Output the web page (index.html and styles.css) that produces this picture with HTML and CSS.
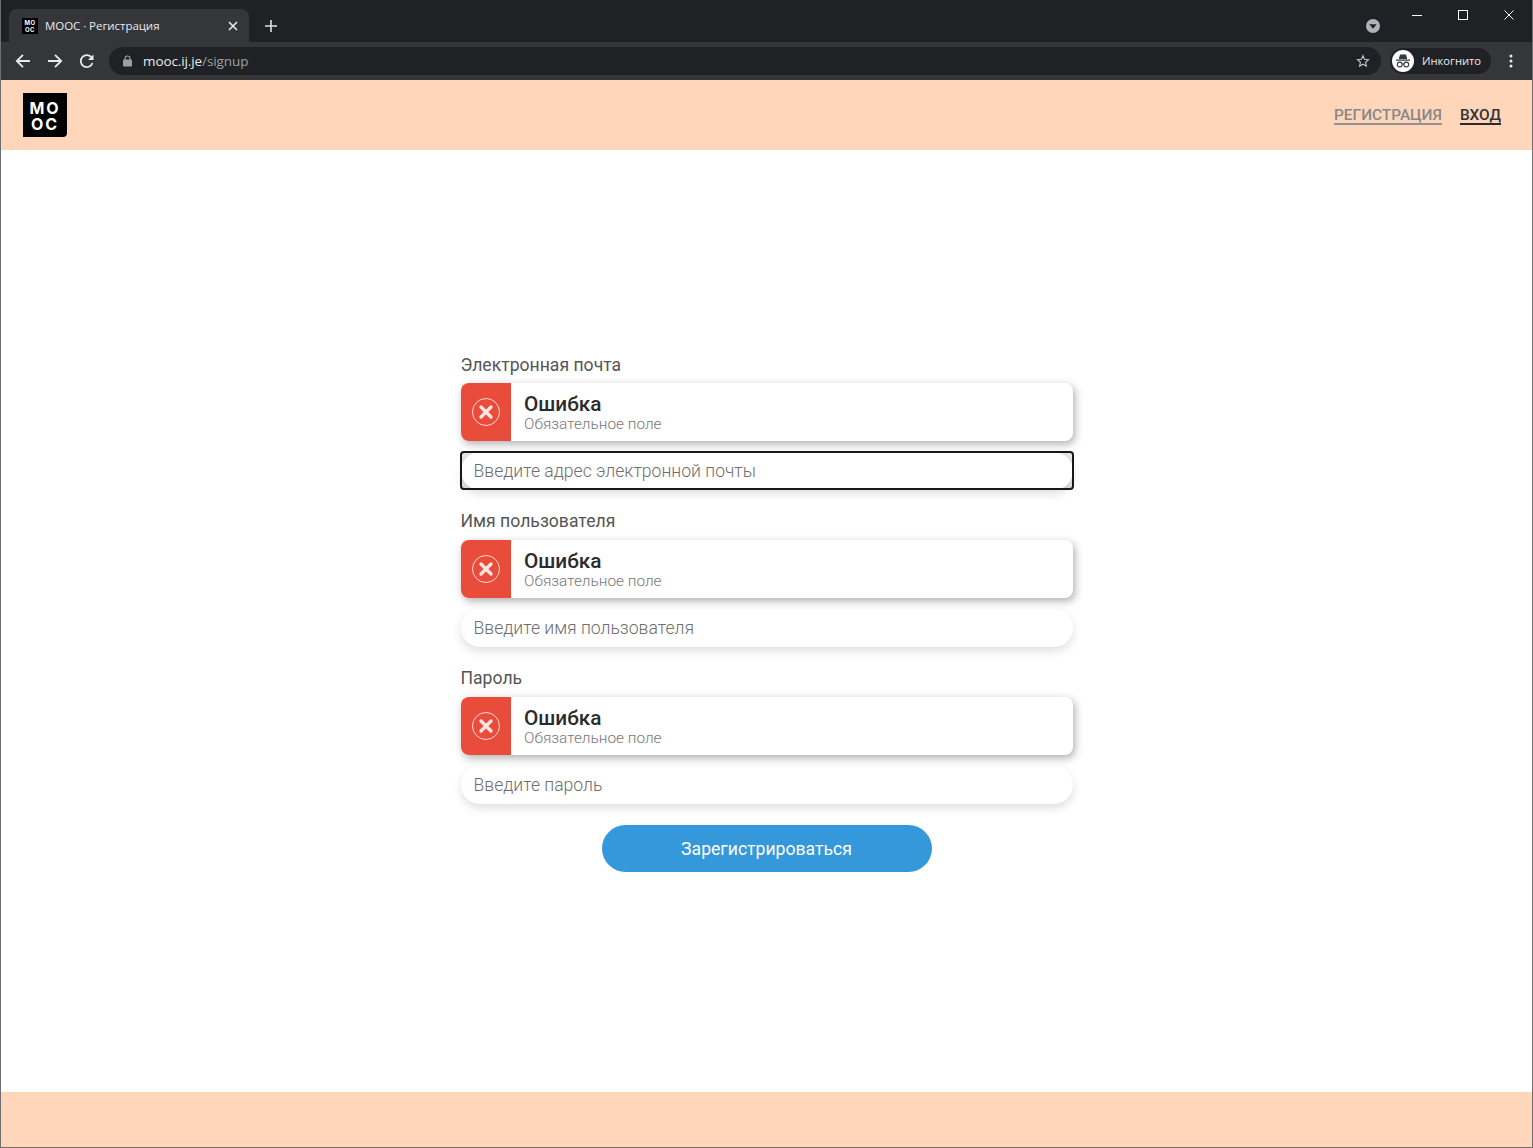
FILE: index.html
```html
<!DOCTYPE html>
<html lang="ru">
<head>
<meta charset="utf-8">
<title>MOOC · Регистрация</title>
<link rel="stylesheet" href="styles.css">
</head>
<body>
<div class="window">
  <div class="tabstrip">
    <div class="tab">
      <span class="favicon">MO<br>OC</span>
      <span class="tab-title">MOOC · Регистрация</span>
      <svg class="tab-close" width="10" height="10" viewBox="0 0 10 10"><path d="M1 1l8 8M9 1l-8 8" stroke="#e8eaed" stroke-width="1.6" fill="none"/></svg>
    </div>
    <svg class="new-tab" width="12" height="12" viewBox="0 0 12 12"><path d="M6 0v12M0 6h12" stroke="#dfe1e5" stroke-width="1.6" fill="none"/></svg>
    <div class="strip-right">
      <span class="tab-search"><svg width="14" height="14" viewBox="0 0 14 14"><circle cx="7" cy="7" r="7" fill="#b0b2b7"/><path d="M3.3 5.2h7.4L7 9.8z" fill="#202124"/></svg></span>
      <div class="win-controls">
        <svg width="10" height="10" viewBox="0 0 10 10"><path d="M0 5.5h10" stroke="#fff" stroke-width="1"/></svg>
        <svg width="10" height="10" viewBox="0 0 10 10"><rect x=".5" y=".5" width="9" height="9" stroke="#fff" fill="none"/></svg>
        <svg width="10" height="10" viewBox="0 0 10 10"><path d="M.5.5l9 9M9.500.5l-9 9" stroke="#fff" fill="none"/></svg>
      </div>
    </div>
  </div>
  <div class="toolbar">
    <svg class="nav-icon" width="16" height="16" viewBox="0 0 16 16"><path d="M15 8H2M8 1.800 1.800 8 8 14.200" stroke="#e8eaed" stroke-width="1.800" fill="none"/></svg>
    <svg class="nav-icon" width="16" height="16" viewBox="0 0 16 16"><path d="M1 8h13M8 1.800 14.200 8 8 14.200" stroke="#e8eaed" stroke-width="1.800" fill="none"/></svg>
    <svg class="nav-icon" width="16" height="16" viewBox="0 0 16 16"><path d="M13.500 10a6 6 0 1 1-.6-5" stroke="#e8eaed" stroke-width="1.800" fill="none"/><path d="M14.500 1.500v5.500h-5.500z" fill="#e8eaed"/></svg>
    <div class="omnibox">
      <svg class="lock" width="9" height="12" viewBox="0 0 9 12"><path d="M2 5V3.500a2.500 2.500 0 0 1 5 0V5" stroke="#9aa0a6" stroke-width="1.200" fill="none"/><rect y="4.500" width="9" height="7" rx="1" fill="#9aa0a6"/></svg>
      <span class="url"><span class="url-host">mooc.ij.je</span>/signup</span>
      <svg class="star" width="14" height="14" viewBox="0 0 24 24"><path d="M12 3l2.700 6.100 6.600.7-4.900 4.400 1.400 6.500L12 17.400l-5.800 3.300 1.400-6.500-4.900-4.400 6.600-.7z" stroke="#bdc1c6" stroke-width="2" fill="none"/></svg>
    </div>
    <div class="profile">
      <span class="profile-icon"><svg width="16" height="14" viewBox="0 0 16 14"><path d="M5 0.500h6l1.200 4.500H3.800zM1 5.500h14v1.200H1z" fill="#35363a"/><circle cx="4.700" cy="10.500" r="2.400" stroke="#35363a" stroke-width="1.100" fill="none"/><circle cx="11.300" cy="10.500" r="2.400" stroke="#35363a" stroke-width="1.100" fill="none"/><path d="M7 10h2" stroke="#35363a"/></svg></span>
      <span class="profile-name">Инкогнито</span>
    </div>
    <svg class="menu" width="4" height="14" viewBox="0 0 4 14"><circle cx="2" cy="2" r="1.500" fill="#e8eaed"/><circle cx="2" cy="7" r="1.500" fill="#e8eaed"/><circle cx="2" cy="12" r="1.500" fill="#e8eaed"/></svg>
  </div>

  <header class="site-header">
    <a class="logo">MO<br>OC</a>
    <nav class="site-nav">
      <a class="nav-link muted">РЕГИСТРАЦИЯ</a>
      <a class="nav-link">ВХОД</a>
    </nav>
  </header>

  <main class="site-main">
    <form class="form">
      <div class="field">
        <div class="label">Электронная почта</div>
        <div class="alert">
          <div class="alert-icon"><svg width="30" height="30" viewBox="0 0 30 30"><circle cx="15" cy="15" r="13.500" stroke="#fbd9d5" fill="none"/><path d="M10 10l10 10M20 10L10 20" stroke="#fde5e2" stroke-width="3.400" stroke-linecap="round"/></svg></div>
          <div class="alert-body"><div class="alert-title">Ошибка</div><div class="alert-text">Обязательное поле</div></div>
        </div>
        <div class="input focused">Введите адрес электронной почты</div>
      </div>
      <div class="field">
        <div class="label">Имя пользователя</div>
        <div class="alert">
          <div class="alert-icon"><svg width="30" height="30" viewBox="0 0 30 30"><circle cx="15" cy="15" r="13.500" stroke="#fbd9d5" fill="none"/><path d="M10 10l10 10M20 10L10 20" stroke="#fde5e2" stroke-width="3.400" stroke-linecap="round"/></svg></div>
          <div class="alert-body"><div class="alert-title">Ошибка</div><div class="alert-text">Обязательное поле</div></div>
        </div>
        <div class="input">Введите имя пользователя</div>
      </div>
      <div class="field">
        <div class="label">Пароль</div>
        <div class="alert">
          <div class="alert-icon"><svg width="30" height="30" viewBox="0 0 30 30"><circle cx="15" cy="15" r="13.500" stroke="#fbd9d5" fill="none"/><path d="M10 10l10 10M20 10L10 20" stroke="#fde5e2" stroke-width="3.400" stroke-linecap="round"/></svg></div>
          <div class="alert-body"><div class="alert-title">Ошибка</div><div class="alert-text">Обязательное поле</div></div>
        </div>
        <div class="input">Введите пароль</div>
      </div>
      <button class="submit" type="button">Зарегистрироваться</button>
    </form>
  </main>

  <footer class="site-footer"></footer>
</div>
</body>
</html>
```
FILE: styles.css
```css
* { box-sizing: border-box; }
html, body { margin: 0; height: 100%; }
body { font-family: Roboto, "Liberation Sans", sans-serif; background: #fff; overflow: hidden; }
.window {
  height: 1148px; display: flex; flex-direction: column;
  border: solid #6f6f6f; border-width: 0 1px 1px 1px;
}
.tabstrip { height: 42px; flex: none; background: #202124; display: flex; align-items: flex-start; position: relative; }
.tab {
  width: 240px; height: 34px; margin: 9px 0 0 8px; background: #35363a;
  border-radius: 8px 8px 0 0; display: flex; align-items: center; padding: 0 11px 0 13px;
}
.favicon {
  width: 16px; height: 16px; background: #000; color: #fff; font: 700 6px/7px Inter, sans-serif;
  text-align: center; padding-top: 1px; flex: none; letter-spacing: .4px;
}
.tab-title { font: 400 11.500px "Open Sans", sans-serif; color: #e8eaed; margin-left: 7px; flex: 1; white-space: nowrap; letter-spacing: -.05px; padding-bottom: 2px; }
.new-tab { margin: 20px 0 0 16px; }
.strip-right { margin-left: auto; display: flex; align-items: flex-start; }
.tab-search { margin: 19px 32px 0 0; height: 14px; display: block; }
.tab-search svg, .win-controls svg { display: block; }
.win-controls { display: flex; gap: 36px; padding: 10px 18px 0 0; }
.toolbar { height: 38px; flex: none; background: #35363a; display: flex; align-items: center; padding-left: 14px; }
.nav-icon { margin-right: 16px; flex: none; }
.omnibox {
  width: 1272px; height: 28px; margin: 0 0 0 -2px; background: #202124; border-radius: 14px;
  display: flex; align-items: center; padding: 0 11px 0 14px; flex: none;
}
.lock { flex: none; }
.url { font: 400 13.500px "Open Sans", sans-serif; color: #9aa0a6; margin-left: 11px; flex: 1; letter-spacing: -.1px; padding-bottom: 1px; }
.url-host { color: #e8eaed; }
.profile {
  height: 26px; width: 101px; margin-left: 9px; background: #202124; border-radius: 13px;
  display: flex; align-items: center; padding-left: 2px; flex: none;
}
.profile-icon { width: 22px; height: 22px; border-radius: 50%; background: #fff; display: flex; align-items: center; justify-content: center; }
.profile-name { font: 400 11.200px "Open Sans", sans-serif; color: #e8eaed; margin-left: 8px; padding-bottom: 1px; }
.menu { margin-left: 18px; flex: none; }
.site-header {
  height: 70px; flex: none; background: #ffd6ba; display: flex; align-items: center;
  justify-content: space-between; padding: 0 31px 0 22px;
}
.logo {
  width: 44px; height: 44px; background: #000; border-radius: 0 0 4px 0; color: #fff;
  font: 700 16px/16px Inter, sans-serif; text-align: center; padding-top: 7px; letter-spacing: 1.800px;
}
.site-nav { display: flex; gap: 18px; }
.nav-link { font-size: 15.400px; font-weight: 500; line-height: 16px; padding-top: 2px; color: #333; border-bottom: 2px solid #2b2b2b; }
.nav-link.muted { color: #888; border-color: #929292; }
.site-main { flex: 1; display: flex; justify-content: center; padding-top: 202.600px; }
.form { width: 612px; display: flex; flex-direction: column; }
.field { display: flex; flex-direction: column; margin-bottom: 19.400px; }
.label { font-size: 17.600px; font-weight: 400; color: #555; line-height: 24px; height: 24px; margin-bottom: 6.400px; }
.alert { height: 58px; background: #fff; border-radius: 8px; display: flex; overflow: hidden; box-shadow: 2px 3px 8px rgba(0,0,0,.32); flex: none; }
.alert-icon { width: 50px; background: #ea4c3c; display: flex; align-items: center; justify-content: center; flex: none; }
.alert-icon svg { display: block; }
.alert-body { padding: 9px 0 0 13.500px; }
.alert-title { font-size: 20.800px; font-weight: 500; line-height: 24px; color: #2b2b2b; }
.alert-text { font-size: 15.400px; font-weight: 300; line-height: 17px; color: #777; }
.input {
  height: 38px; margin-top: 11px; border-radius: 19px; background: #fff; padding: 0 13px;
  font-size: 17.600px; font-weight: 300; line-height: 38px; color: #6e6e6e; box-shadow: 0 4px 10px rgba(0,0,0,.13);
  position: relative;
}
.input.focused::before {
  content: ""; position: absolute; inset: 0; z-index: -1; background: #e6e6e6;
}
.input.focused::after {
  content: ""; position: absolute; inset: -1px -1px 0 -1px; border: 2px solid #16191c; border-radius: 4px;
}
.submit {
  width: 330px; height: 47px; border: 0; border-radius: 24px; background: #3498db; color: #fff;
  font: 400 17.600px Roboto, sans-serif; align-self: center; margin-top: 2px; padding: 2px 0 0;
}
.site-footer { height: 55px; flex: none; background: #ffd6ba; }
```
